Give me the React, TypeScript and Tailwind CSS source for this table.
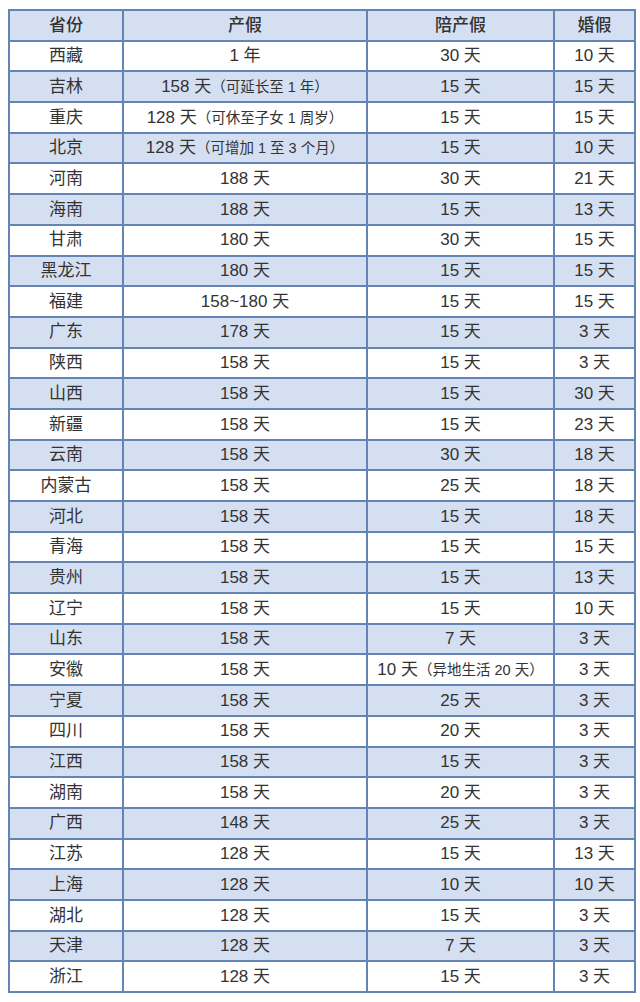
const rows: [string, string, string, string][] = [
  ["西藏", "1 年", "30 天", "10 天"],
  ["吉林", "158 天|（可延长至 1 年）", "15 天", "15 天"],
  ["重庆", "128 天|（可休至子女 1 周岁）", "15 天", "15 天"],
  ["北京", "128 天|（可增加 1 至 3 个月）", "15 天", "10 天"],
  ["河南", "188 天", "30 天", "21 天"],
  ["海南", "188 天", "15 天", "13 天"],
  ["甘肃", "180 天", "30 天", "15 天"],
  ["黑龙江", "180 天", "15 天", "15 天"],
  ["福建", "158~180 天", "15 天", "15 天"],
  ["广东", "178 天", "15 天", "3 天"],
  ["陕西", "158 天", "15 天", "3 天"],
  ["山西", "158 天", "15 天", "30 天"],
  ["新疆", "158 天", "15 天", "23 天"],
  ["云南", "158 天", "30 天", "18 天"],
  ["内蒙古", "158 天", "25 天", "18 天"],
  ["河北", "158 天", "15 天", "18 天"],
  ["青海", "158 天", "15 天", "15 天"],
  ["贵州", "158 天", "15 天", "13 天"],
  ["辽宁", "158 天", "15 天", "10 天"],
  ["山东", "158 天", "7 天", "3 天"],
  ["安徽", "158 天", "10 天|（异地生活 20 天）", "3 天"],
  ["宁夏", "158 天", "25 天", "3 天"],
  ["四川", "158 天", "20 天", "3 天"],
  ["江西", "158 天", "15 天", "3 天"],
  ["湖南", "158 天", "20 天", "3 天"],
  ["广西", "148 天", "25 天", "3 天"],
  ["江苏", "128 天", "15 天", "13 天"],
  ["上海", "128 天", "10 天", "10 天"],
  ["湖北", "128 天", "15 天", "3 天"],
  ["天津", "128 天", "7 天", "3 天"],
  ["浙江", "128 天", "15 天", "3 天"],
];

const Cell = ({ text }: { text: string }) => {
  const [main, note] = text.split("|");
  return (
    <td className="border-2 border-[#6384b4] text-center p-0">
      {main}
      {note && <span className="text-[14.5px]">{note}</span>}
    </td>
  );
};

export default function App() {
  return (
    <div
      className="w-[640px] h-[1002px] bg-white pt-[9px] pl-[8px]"
      style={{ fontFamily: '"Liberation Sans", "Noto Sans CJK SC", sans-serif' }}
    >
      <table className="w-[626px] table-fixed border-collapse text-[17px] text-[#333333]">
        <colgroup>
          <col className="w-[114px]" />
          <col className="w-[244px]" />
          <col className="w-[187px]" />
          <col className="w-[81px]" />
        </colgroup>
        <thead>
          <tr className="h-[30.7px] bg-[#d5dff2]">
            {["省份", "产假", "陪产假", "婚假"].map((h) => (
              <th key={h} className="border-2 border-[#6384b4] text-center p-0 font-medium">
                {h}
              </th>
            ))}
          </tr>
        </thead>
        <tbody>
          {rows.map((r, i) => (
            <tr key={r[0]} className={`h-[30.7px] ${i % 2 === 1 ? "bg-[#d5dff2]" : "bg-white"}`}>
              {r.map((c, j) => (
                <Cell key={j} text={c} />
              ))}
            </tr>
          ))}
        </tbody>
      </table>
    </div>
  );
}
